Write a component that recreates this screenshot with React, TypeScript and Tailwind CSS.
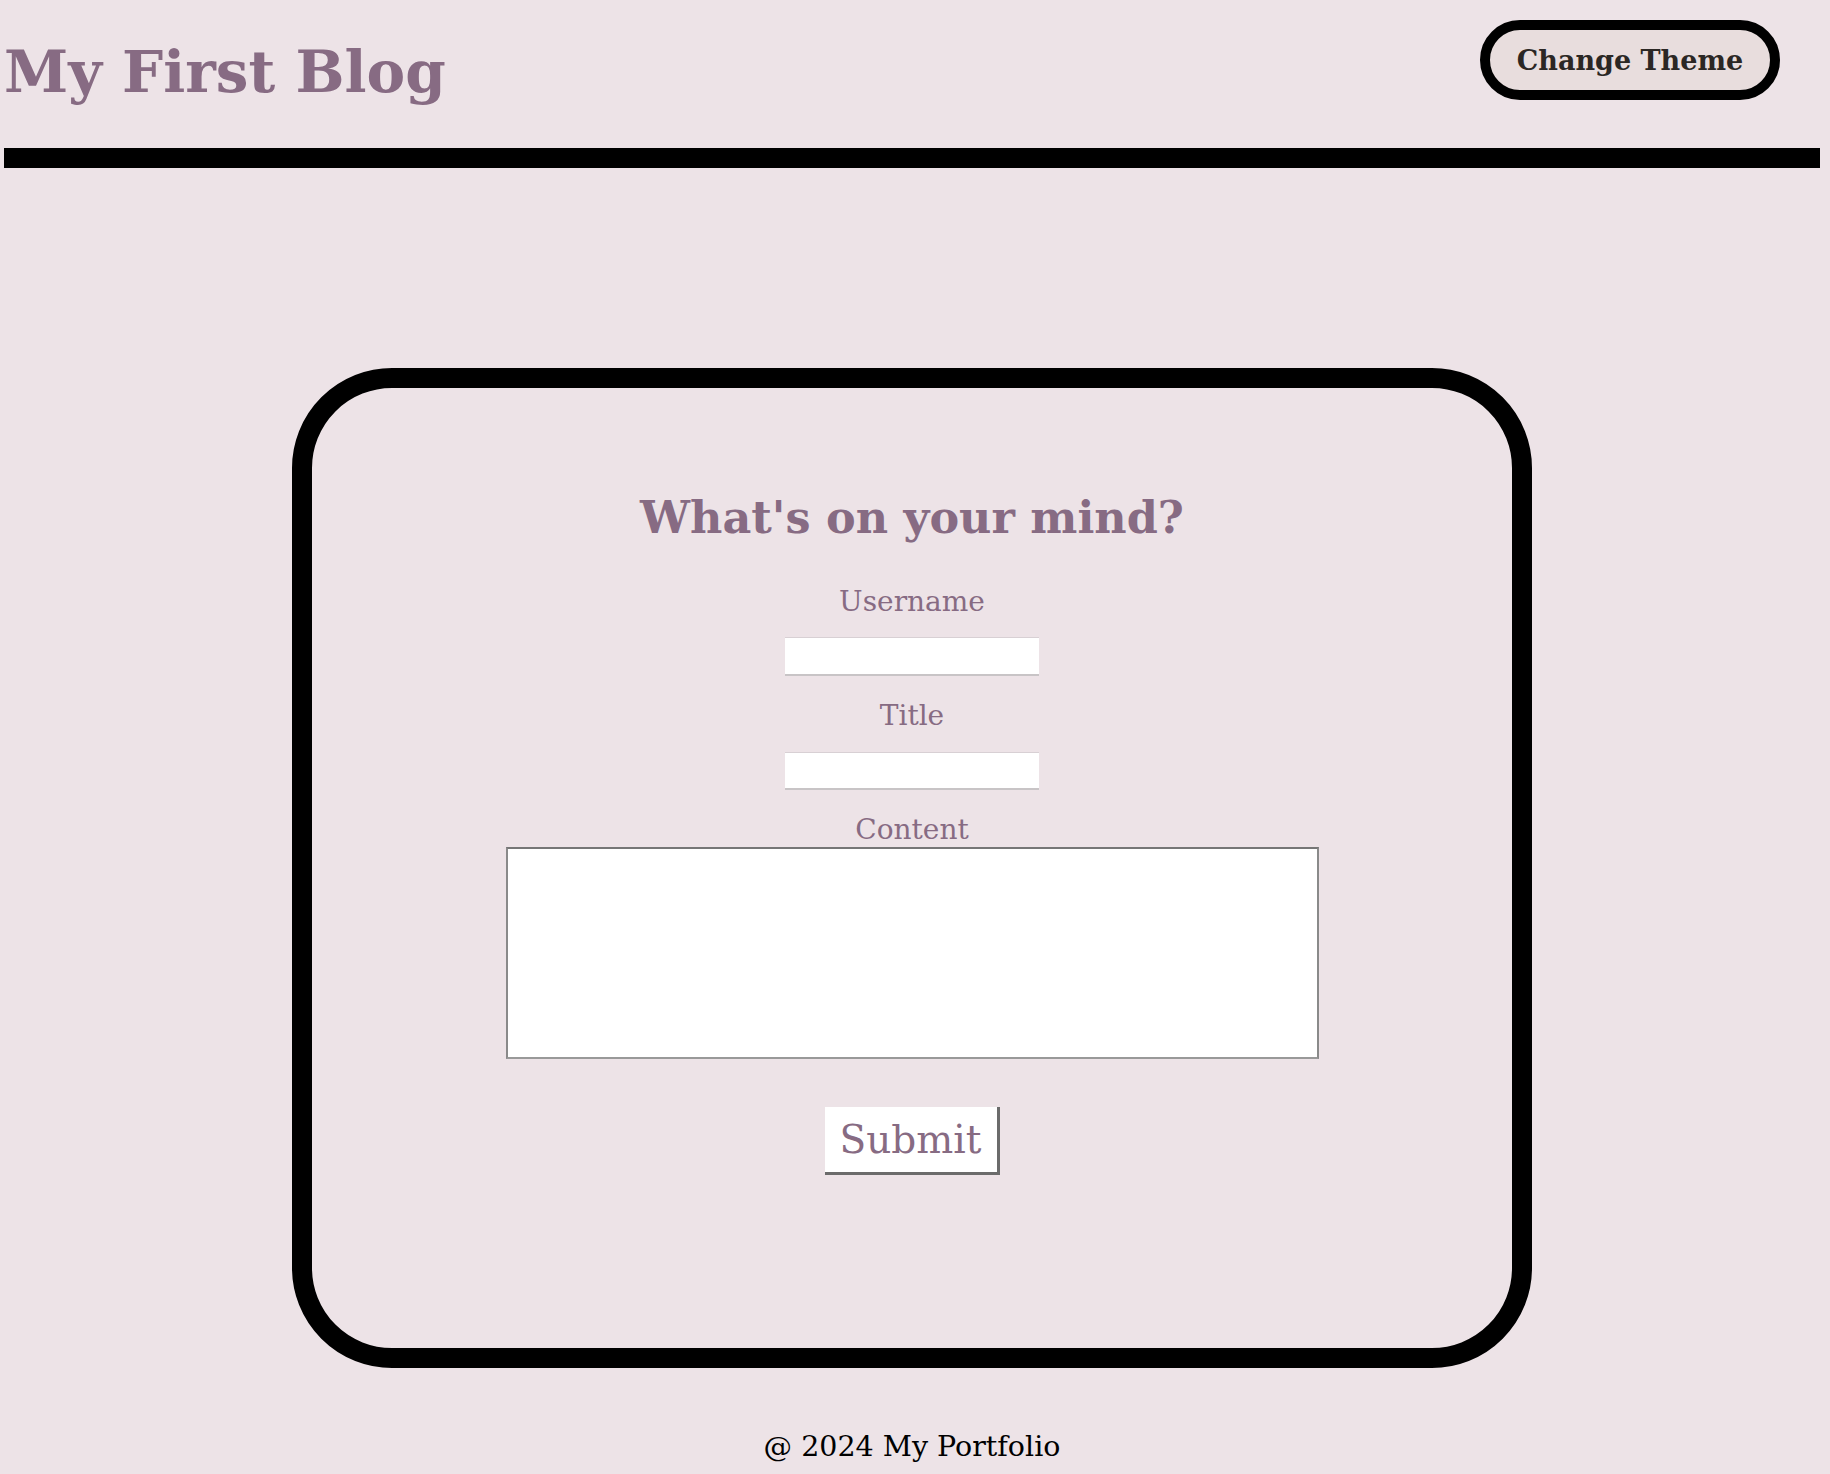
export default function App() {
  return (
    <div className="min-h-screen bg-[#ede3e7] pr-[6px] font-['DejaVu_Serif',serif]">
      <header className="flex h-[148px] items-start justify-between pl-[4px] pr-[44px]">
        <h1 className="mt-[40px] text-[58px] font-bold leading-[64px] text-[#876b83]">My First Blog</h1>
        <button className="mt-[20px] h-[80px] w-[300px] rounded-full border-[10px] border-black bg-[#e8dddd] text-[27px] font-bold leading-none text-[#2b2724]">
          Change Theme
        </button>
      </header>
      <div className="mx-[4px] h-[20px] bg-black" />

      <main className="mx-auto mt-[200px] flex h-[1000px] w-[1240px] flex-col items-center rounded-[100px] border-[20px] border-black pt-[105px]">
        <h2 className="text-[44.5px] font-bold leading-[48px] text-[#876b83]">What's on your mind?</h2>
        <form className="flex flex-col items-center">
          <label className="mt-[45px] text-[28px] leading-[32px] text-[#876b83]">Username</label>
          <input className="mt-[19px] h-[39px] w-[254px] border-t border-b-2 border-t-[#d8d0d4] border-b-[#c8c4c6] bg-white" />
          <label className="mt-[24px] text-[28px] leading-[32px] text-[#876b83]">Title</label>
          <input className="mt-[20px] h-[38px] w-[254px] border-t border-b-2 border-t-[#d8d0d4] border-b-[#c8c4c6] bg-white" />
          <label className="mt-[24px] text-[28px] leading-[32px] text-[#876b83]">Content</label>
          <textarea className="mt-[1px] h-[212px] w-[813px] resize-none border-2 border-t-[#767676] border-x-[#8a8a8a] border-b-[#999999] bg-white" />
          <button
            type="button"
            className="mt-[48px] h-[68px] w-[175px] border-r-[3px] border-b-[3px] border-[#6b6b6b] bg-white text-[39px] leading-none text-[#876b83]"
          >
            Submit
          </button>
        </form>
      </main>

      <footer className="mt-[63px] pb-[20px] text-center text-[28.5px] leading-[32px] text-black">@ 2024 My Portfolio</footer>
    </div>
  );
}
